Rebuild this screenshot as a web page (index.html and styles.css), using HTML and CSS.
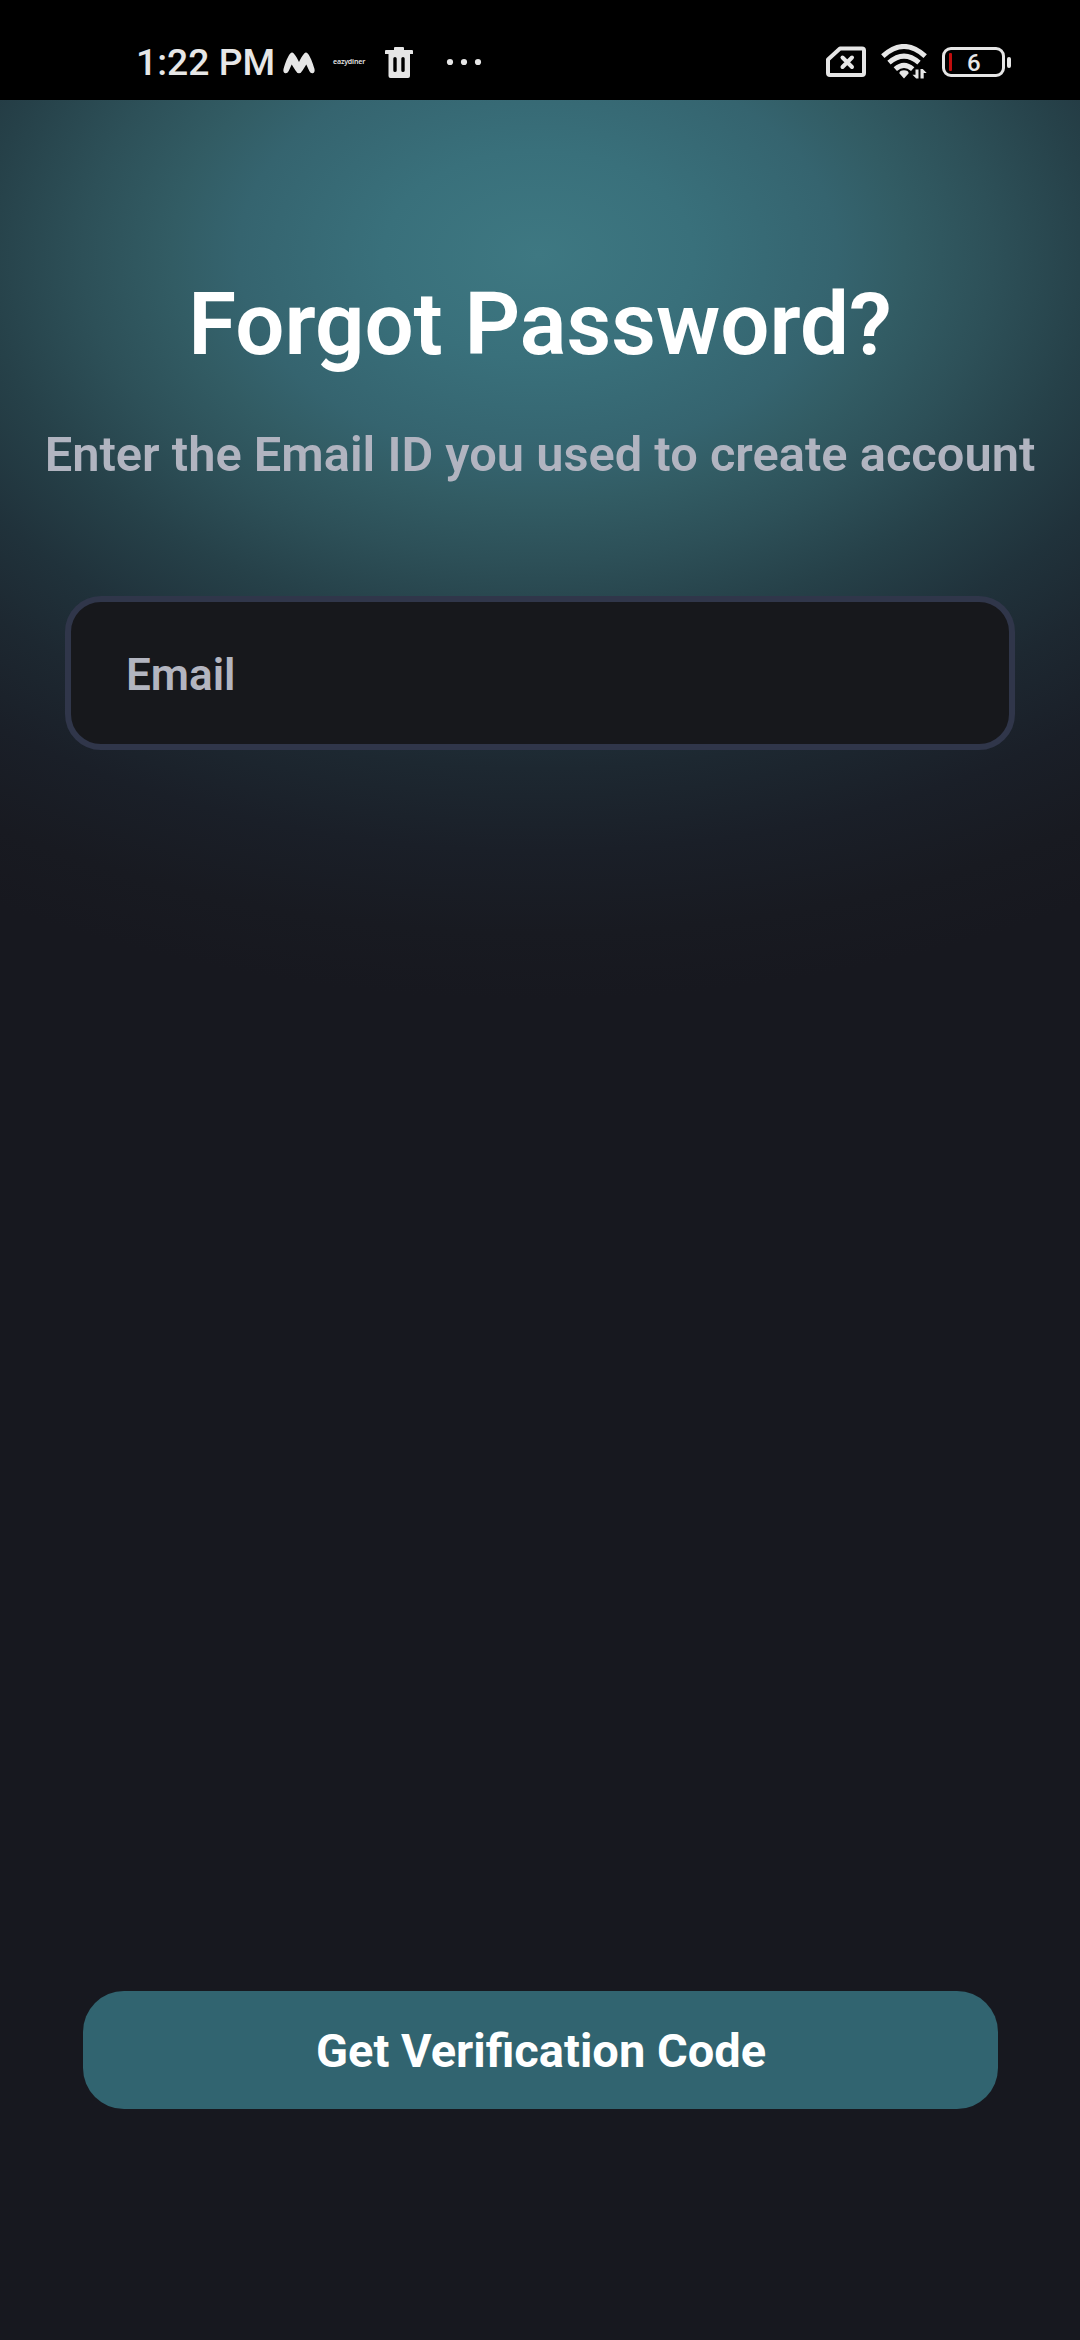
FILE: index.html
```html
<!DOCTYPE html>
<html lang="en">
<head>
<meta charset="utf-8">
<title>Forgot Password</title>
<link rel="stylesheet" href="styles.css">
</head>
<body>
<header class="status">
  <div class="status-left">
    <span class="time">1:22 PM</span>
    <svg class="icon-m" width="34" height="24" viewBox="0 0 34 24"><path fill="#e6e6e6" d="M1.500 18C3.500 11 6 5 8.300 2.500Q10 .5 11.800 2.500C14 5 15.500 8 17 11C18.500 8 20 5 22.200 2.500Q24 .5 25.700 2.500C28 5 30.500 11 32.500 18Q33.200 21.500 30.800 22.300Q28.500 22.700 27.300 20L24.300 13.500L20.500 19.500Q19 22.300 17 22.300Q15 22.300 13.500 19.500L9.700 13.500L6.700 20Q5.500 22.700 3.200 22.300Q.8 21.500 1.500 18Z"/></svg>
    <span class="brand">eazydiner</span>
    <svg class="icon-trash" width="28" height="31" viewBox="0 0 28 31"><path fill="#e6e6e6" fill-rule="evenodd" d="M10 0h8q1 0 1 1v2h8q1 0 1 1v3h-3v22q0 2-2 2H5.500q-2 0-2-2V7H0V4q0-1 1-1h8V1q0-1 1-1zM10 10q-1.700 0-1.700 1.500v12q0 1.500 1.700 1.500t1.700-1.500v-12Q11.700 10 10 10zM18 10q-1.700 0-1.700 1.500v12q0 1.500 1.700 1.500t1.700-1.500v-12Q19.700 10 18 10z"/></svg>
    <svg class="icon-dots" width="36" height="8" viewBox="0 0 36 8" fill="#e6e6e6"><circle cx="4" cy="4" r="3.100"/><circle cx="18" cy="4" r="3.100"/><circle cx="32" cy="4" r="3.100"/></svg>
  </div>
  <div class="status-right">
    <svg width="40" height="32" viewBox="0 0 40 32" fill="none" stroke="#e6e6e6"><path d="M14 2.500H36Q38 2.500 38 4.500V27Q38 29 36 29H4Q2 29 2 27V13.500Z" stroke-width="4" stroke-linejoin="round"/><path d="M16.500 11.500L26 21M26 11.500L16.500 21" stroke-width="4" stroke-linecap="round"/></svg>
    <svg class="icon-wifi" width="48" height="36" viewBox="0 0 48 36"><g fill="none" stroke="#e6e6e6" stroke-width="5"><path d="M1.800 12.200Q23 -7.200 44.200 12.200"/><path d="M8 18.700Q23 5.500 38 18.700"/><path d="M14.300 25.200Q23 17.500 31.700 25.200"/></g><path fill="#e6e6e6" d="M18.300 29.300Q18.500 26.200 23 26.200Q27.500 26.200 27.700 29.300L23 34.500ZM34.500 25.500h3v9h-2.300l-3.700-3.800h3zM39.500 25h2.200l4 4h-3v5.500h-3.200z"/></svg>
    <span class="battery"><span class="level"></span><span class="percent">6</span></span><span class="battery-tip"></span>
  </div>
</header>
<main class="screen">
  <h1 class="title">Forgot Password?</h1>
  <p class="subtitle">Enter the Email ID you used to create account</p>
  <input class="field" type="email" placeholder="Email" aria-label="Email">
  <button class="submit" type="button">Get Verification Code</button>
</main>
</body>
</html>
```
FILE: styles.css
```css
* { box-sizing: border-box; }
body {
  margin: 0;
  height: 2340px;
  display: flex;
  flex-direction: column;
  background: #17181f;
  font-family: Roboto, sans-serif;
  overflow: hidden;
}
.status {
  height: 100px;
  flex: none;
  padding: 25px 69px 0 136px;
  display: flex;
  justify-content: space-between;
  background: #000;
  color: #e6e6e6;
}
.status-left, .status-right { display: flex; align-items: center; height: 74px; }
.time { width: 146px; font-size: 37.3px; line-height: 44px; font-weight: 500; white-space: nowrap; }
.icon-m { margin-top: 1px; }
.brand { margin-left: 17px; width: 33px; font: 600 7px/8px "Noto Sans", sans-serif; letter-spacing: -0.15px; }
.icon-trash { margin-left: 19px; }
.icon-dots { margin-left: 33px; }
.icon-wifi { margin-left: 15px; }
.battery {
  margin-left: 13px;
  width: 63px;
  height: 30px;
  border: 3px solid #e6e6e6;
  border-radius: 9px;
  display: flex;
  align-items: center;
}
.level { width: 3px; height: 18px; margin-left: 4px; border-radius: 1px; background: #c00d0d; }
.percent { margin-left: 15px; font-size: 24px; line-height: 24px; font-weight: 500; padding-top: 2px; }
.battery-tip { width: 4px; height: 11px; margin-left: 2px; border-radius: 2px; background: #e6e6e6; }
.screen {
  flex: 1;
  display: flex;
  flex-direction: column;
  align-items: center;
  background: radial-gradient(ellipse 1110px 745px at 538px 155px, #3e7882 0%, #39707b 14%, #35646f 27%, #325c64 33%, #2d5058 41%, #264149 50%, #20323b 60%, #1d2831 69%, #1a1f28 80%, #181a21 91%, #17181f 100%) #17181f;
}
.title { margin: 173px 0 0; font-size: 87px; line-height: 102px; font-weight: 600; color: #fff; white-space: nowrap; }
.subtitle { margin: 52px 0 0; font-size: 48.800px; line-height: 56px; font-weight: 600; color: #b1b4c0; white-space: nowrap; }
.field {
  margin: 113px 0 0;
  width: 950px;
  height: 154px;
  padding: 3px 55px 0;
  border: 6px solid #30364a;
  border-radius: 36px;
  background: #17181c;
  color: #fff;
  font: 600 44px/52px Roboto, sans-serif;
}
.field::placeholder { color: #b3b5c0; opacity: 1; }
.submit {
  margin: auto 0 231px;
  width: 915px;
  height: 118px;
  padding: 2px 0 0 2px;
  border: 0;
  border-radius: 41px;
  background: #316470;
  color: #fff;
  font: 700 47px/56px Roboto, sans-serif;
}
```
